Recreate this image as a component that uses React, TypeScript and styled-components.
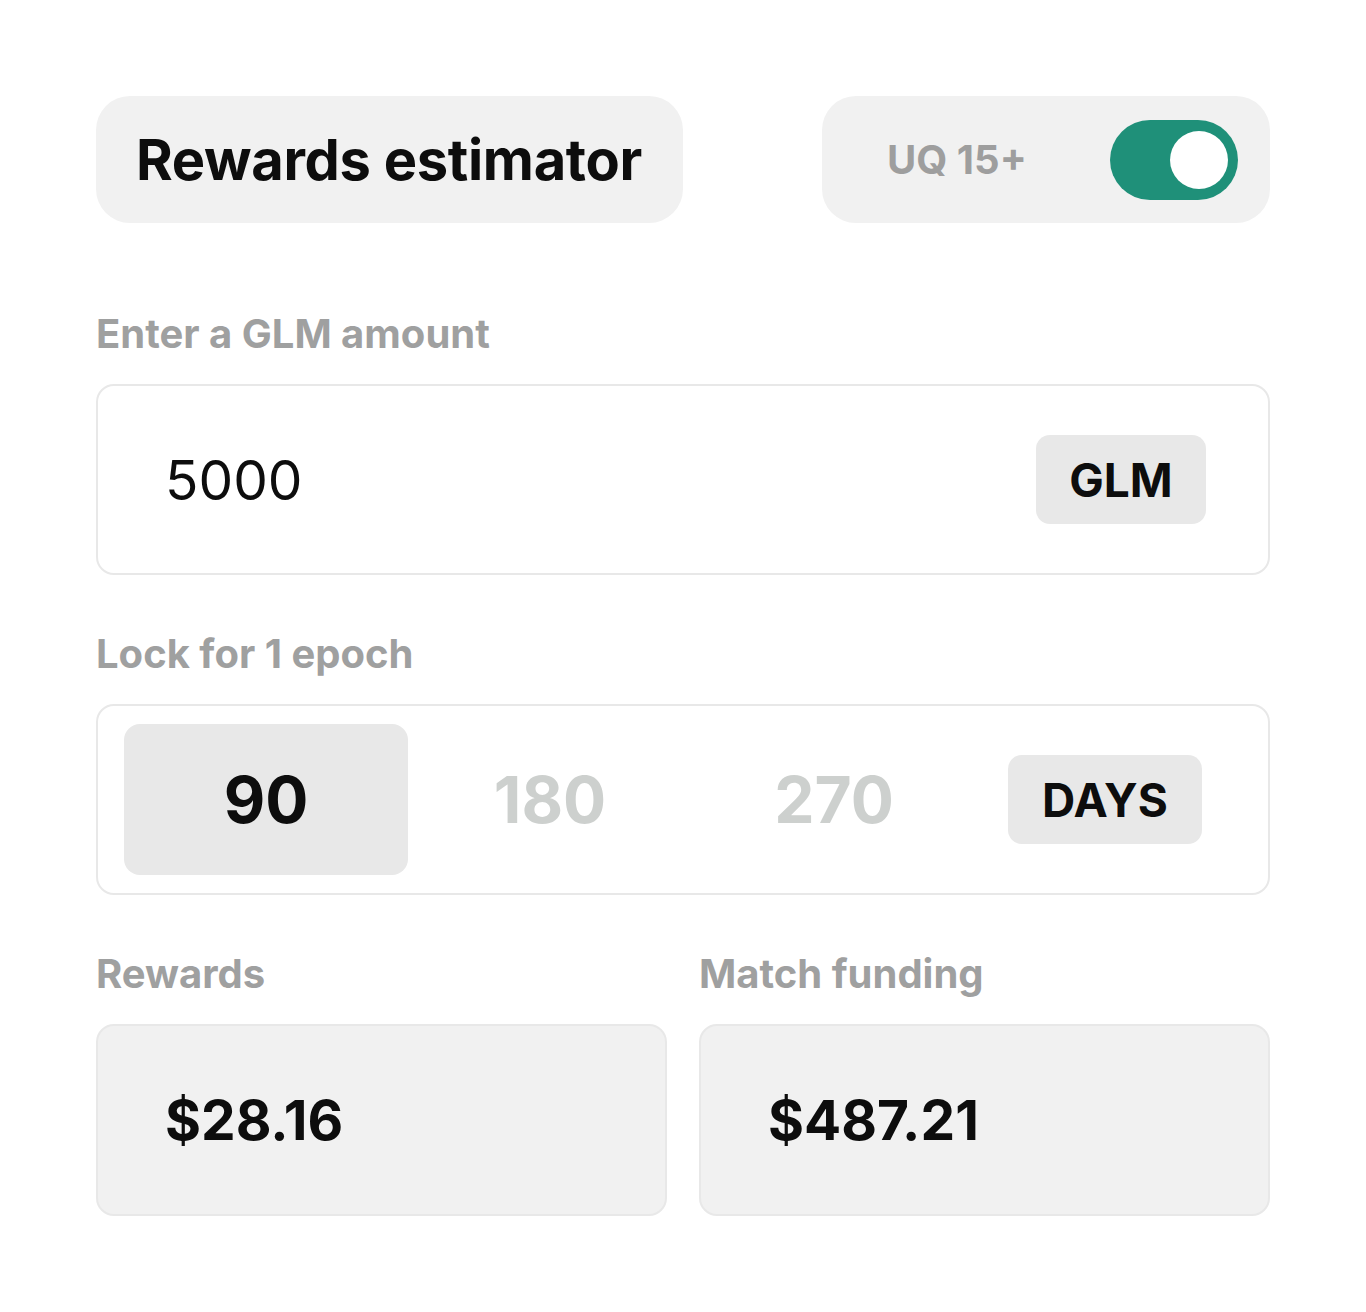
import styled, { createGlobalStyle } from 'styled-components';

const GlobalStyle = createGlobalStyle`
  html, body {
    margin: 0;
    padding: 0;
    background: #ffffff;
    font-family: Inter, "Liberation Sans", sans-serif;
    color: #0d0d0d;
  }
`;

const DAY_OPTIONS = [90, 180, 270];

function App() {
  const selectedDays = 90;

  return (
    <>
      <GlobalStyle />
      <Page>
        <Header>
          <TitlePill>Rewards estimator</TitlePill>
          <TogglePill>
            <ToggleLabel>UQ 15+</ToggleLabel>
            <Switch $on>
              <Knob />
            </Switch>
          </TogglePill>
        </Header>

        <Section>
          <Label>Enter a GLM amount</Label>
          <InputBox>
            <AmountText>5000</AmountText>
            <Chip $width={170}>GLM</Chip>
          </InputBox>
        </Section>

        <Section>
          <Label>Lock for 1 epoch</Label>
          <DaysBox>
            {DAY_OPTIONS.map((d) => (
              <DayOption key={d} $active={d === selectedDays}>{d}</DayOption>
            ))}
            <DaysChipWrap>
              <Chip $width={194}>DAYS</Chip>
            </DaysChipWrap>
          </DaysBox>
        </Section>

        <ResultsGrid>
          <div>
            <Label>Rewards</Label>
            <ResultBox>$28.16</ResultBox>
          </div>
          <div>
            <Label>Match funding</Label>
            <ResultBox>$487.21</ResultBox>
          </div>
        </ResultsGrid>
      </Page>
    </>
  );
}

export default App;

const Page = styled.div`
  width: 1174px;
  padding: 96px 96px 80px;
`;

const Header = styled.div`
  display: flex;
  justify-content: space-between;
  align-items: center;
  height: 127px;
`;

const TitlePill = styled.div`
  height: 127px;
  width: 587px;
  box-sizing: border-box;
  padding: 0 40px;
  display: flex;
  align-items: center;
  border-radius: 34px;
  background: #f1f1f1;
  font-size: 56px;
  font-weight: 700;
  letter-spacing: -0.3px;
`;

const TogglePill = styled.div`
  height: 127px;
  width: 448px;
  box-sizing: border-box;
  padding: 0 32px 0 65px;
  display: flex;
  align-items: center;
  justify-content: space-between;
  border-radius: 34px;
  background: #f1f1f1;
`;

const ToggleLabel = styled.span`
  font-size: 40px;
  font-weight: 700;
  color: #9e9e9e;
`;

const Switch = styled.div<{ $on?: boolean }>`
  width: 128px;
  height: 80px;
  box-sizing: border-box;
  padding: 0 10px;
  border-radius: 40px;
  background: ${(p) => (p.$on ? '#1f9079' : '#cfcfcf')};
  display: flex;
  align-items: center;
  justify-content: ${(p) => (p.$on ? 'flex-end' : 'flex-start')};
`;

const Knob = styled.div`
  width: 58px;
  height: 58px;
  border-radius: 50%;
  background: #ffffff;
`;

const Section = styled.div`
  margin-top: 87px;
  & + & {
    margin-top: 55px;
  }
`;

const Label = styled.div`
  font-size: 40px;
  line-height: 48px;
  font-weight: 700;
  color: #9fa0a0;
  margin-bottom: 26px;
`;

const InputBox = styled.div`
  height: 191px;
  box-sizing: border-box;
  border: 2px solid #e8e8e8;
  border-radius: 18px;
  padding: 0 62px 0 67px;
  display: flex;
  align-items: center;
  justify-content: space-between;
`;

const AmountText = styled.span`
  font-size: 55px;
  font-weight: 400;
`;

const Chip = styled.div<{ $width: number }>`
  width: ${(p) => p.$width}px;
  height: 89px;
  border-radius: 14px;
  background: #e8e8e8;
  display: flex;
  align-items: center;
  justify-content: center;
  font-size: 46px;
  font-weight: 700;
`;

const DaysBox = styled.div`
  height: 191px;
  box-sizing: border-box;
  border: 2px solid #e8e8e8;
  border-radius: 18px;
  padding: 18px 66px 18px 26px;
  display: flex;
  align-items: stretch;
`;

const DayOption = styled.div<{ $active?: boolean }>`
  width: 284px;
  border-radius: 16px;
  background: ${(p) => (p.$active ? '#e8e8e8' : 'transparent')};
  color: ${(p) => (p.$active ? '#0d0d0d' : '#cdd0ce')};
  display: flex;
  align-items: center;
  justify-content: center;
  font-size: 64px;
  font-weight: 700;
`;

const DaysChipWrap = styled.div`
  margin-left: auto;
  display: flex;
  align-items: center;
`;

const ResultsGrid = styled.div`
  margin-top: 55px;
  display: grid;
  grid-template-columns: 1fr 1fr;
  column-gap: 32px;
`;

const ResultBox = styled.div`
  height: 192px;
  box-sizing: border-box;
  border: 2px solid #e8e8e8;
  border-radius: 18px;
  background: #f1f1f1;
  padding: 0 67px;
  display: flex;
  align-items: center;
  font-size: 55px;
  font-weight: 700;
`;
